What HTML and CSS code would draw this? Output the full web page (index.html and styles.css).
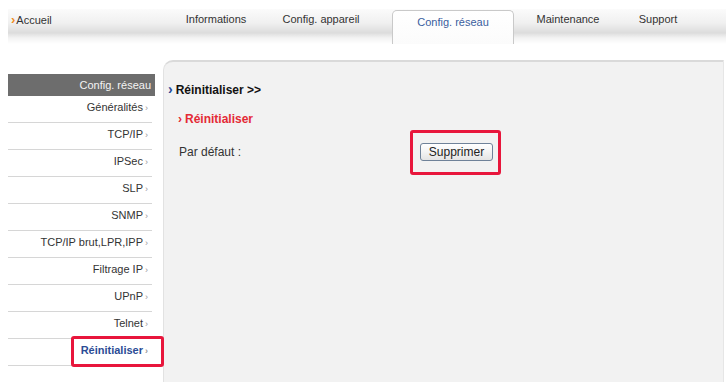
FILE: index.html
```html
<!DOCTYPE html>
<html lang="fr">
<head>
<meta charset="utf-8">
<title>Config. réseau - Réinitialiser</title>
<link rel="stylesheet" href="styles.css">
</head>
<body>
<div class="topbar">
  <div class="home"><span class="home-arrow">&#x203A;</span>Accueil</div>
  <div class="tab t-info">Informations</div>
  <div class="tab t-dev">Config. appareil</div>
  <div class="tab t-net active">Config. réseau</div>
  <div class="tab t-maint">Maintenance</div>
  <div class="tab t-sup">Support</div>
</div>
<div class="main">
  <div class="sidebar">
    <div class="side-head">Config. réseau</div>
    <div class="side-item">Généralités<span class="chev">&#x203A;</span></div>
    <div class="side-item">TCP/IP<span class="chev">&#x203A;</span></div>
    <div class="side-item">IPSec<span class="chev">&#x203A;</span></div>
    <div class="side-item">SLP<span class="chev">&#x203A;</span></div>
    <div class="side-item">SNMP<span class="chev">&#x203A;</span></div>
    <div class="side-item">TCP/IP brut,LPR,IPP<span class="chev">&#x203A;</span></div>
    <div class="side-item">Filtrage IP<span class="chev">&#x203A;</span></div>
    <div class="side-item">UPnP<span class="chev">&#x203A;</span></div>
    <div class="side-item">Telnet<span class="chev">&#x203A;</span></div>
    <div class="side-item current">Réinitialiser<span class="chev">&#x203A;</span><span class="mark mark-side"></span></div>
  </div>
  <div class="panel">
    <div class="crumb"><span class="crumb-arrow">&#x203A;</span>Réinitialiser &gt;&gt;</div>
    <div class="section-title"><span class="sec-arrow">&#x203A;</span>Réinitialiser</div>
    <div class="row">
      <span class="label">Par défaut :</span>
      <span class="btn-wrap"><button class="btn">Supprimer</button><span class="mark mark-btn"></span></span>
    </div>
  </div>
</div>
</body>
</html>
```
FILE: styles.css
```css
html, body {
  margin: 0;
  padding: 0;
  background: #ffffff;
}
body {
  width: 726px;
  height: 382px;
  overflow: hidden;
  font-family: "Liberation Sans", Arial, sans-serif;
  font-size: 11px;
  color: #222;
  padding-top: 9px;
  box-sizing: border-box;
}
.topbar {
  margin-left: 8px;
  height: 35px;
  display: flex;
  align-items: flex-start;
  background: linear-gradient(to bottom, #fbfbfb 0px, #f0f0f0 14px, #dcdcdc 24px, #e2e2e2 25px, #f3f3f3 29px, #ffffff 35px);
}
.home {
  width: 156px;
  padding-left: 3px;
  box-sizing: border-box;
  line-height: 22px;
  color: #333;
}
.home-arrow {
  color: #f08a1c;
  font-weight: bold;
  font-size: 13px;
  margin-right: 1px;
}
.tab {
  text-align: center;
  line-height: 21px;
  color: #333;
}
.t-info { width: 104px; }
.t-dev { width: 106px; }
.t-net { width: 122px; margin-left: 18px; }
.t-maint { width: 108px; }
.t-sup { width: 72px; }
.tab.active {
  margin-top: 1px;
  height: 34px;
  box-sizing: border-box;
  background: linear-gradient(to bottom, #ffffff 0, #fbfbfb 100%);
  border: 1px solid #c9c9c9;
  border-bottom: none;
  border-radius: 5px 5px 0 0;
  color: #3b5e9e;
  line-height: 22px;
}
.main {
  display: flex;
  margin-top: 16px;
  height: 322px;
}
.sidebar {
  width: 147px;
  margin-left: 8px;
  padding-top: 14px;
}
.side-head {
  background: #6d6d6d;
  color: #f4f4f4;
  height: 22px;
  line-height: 22px;
  text-align: right;
  padding-right: 4px;
  font-size: 11px;
}
.side-item {
  position: relative;
  height: 27px;
  line-height: 22px;
  padding-top: 0;
  box-sizing: border-box;
  text-align: right;
  padding-right: 4px;
  border-bottom: 1px solid #d6d6d6;
  color: #333;
  margin-right: 3px;
}
.chev {
  color: #999;
  font-size: 9px;
  margin-left: 2px;
}
.side-item.current {
  font-weight: bold;
  color: #2b4c95;
}
.mark {
  position: absolute;
  border: 3px solid #e8163c;
  border-radius: 3px;
  box-sizing: border-box;
}
.mark-side {
  left: 63px;
  top: -3px;
  width: 93px;
  height: 31px;
}
.panel {
  flex: 1;
  margin-left: 8px;
  margin-right: 2px;
  background: #f2f2f2;
  border-top: 2px solid #dadada;
  border-left: 1px solid #e2e2e2;
  border-right: 1px solid #e6e6e6;
  border-top-left-radius: 10px;
  padding: 19px 0 0 4px;
}
.crumb {
  font-weight: bold;
  font-size: 12px;
  color: #111;
}
.crumb-arrow {
  color: #23489a;
  font-size: 14px;
  margin-right: 3px;
}
.section-title {
  margin-top: 15px;
  margin-left: 10px;
  font-weight: bold;
  font-size: 12px;
  color: #e42a36;
}
.sec-arrow {
  font-size: 12px;
  margin-right: 3px;
}
.row {
  display: flex;
  align-items: center;
  margin-top: 17px;
  margin-left: 11px;
}
.label {
  width: 241px;
  font-size: 12px;
  color: #333;
}
.btn-wrap {
  position: relative;
}
.btn {
  font-family: "Liberation Sans", Arial, sans-serif;
  font-size: 12px;
  color: #222;
  height: 18px;
  width: 73px;
  padding: 0;
  border: 1px solid #6f8299;
  border-radius: 3px;
  background: linear-gradient(to bottom, #ffffff 0, #f3f3f3 50%, #e4e4e4 100%);
}
.mark-btn {
  left: -10px;
  top: -13px;
  width: 91px;
  height: 45px;
}
```
